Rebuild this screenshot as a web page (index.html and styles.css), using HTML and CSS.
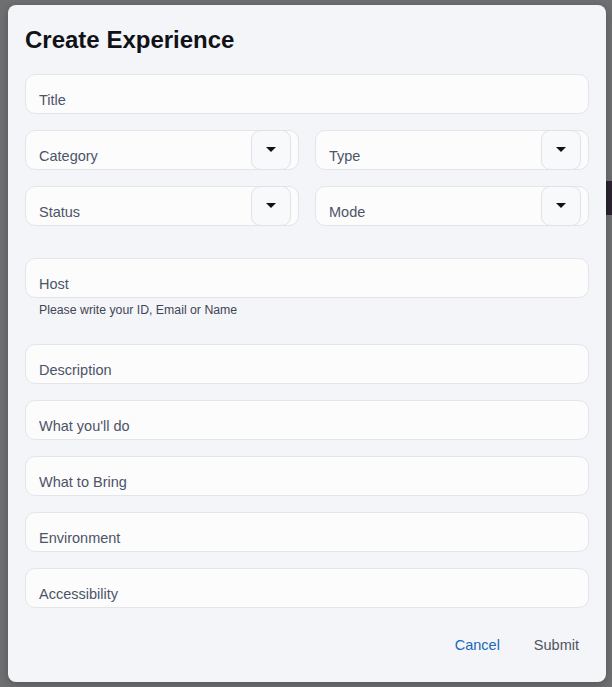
FILE: index.html
```html
<!DOCTYPE html>
<html lang="en">
<head>
    <meta charset="UTF-8">
    <meta name="viewport" content="width=device-width, initial-scale=1.0">
    <title>Create Experience</title>
    <link rel="stylesheet" href="styles.css">
</head>
<body>
    <div class="backdrop">
        <div class="page-strip"></div>
    </div>
    <div class="modal">
        <h2 class="modal-title">Create Experience</h2>
        <form class="form">
            <div class="field"><span class="label">Title</span></div>

            <div class="row">
                <div class="field select"><span class="label">Category</span><span class="drop"><i class="caret"></i></span></div>
                <div class="field select"><span class="label">Type</span><span class="drop"><i class="caret"></i></span></div>
            </div>
            <div class="row row-last">
                <div class="field select"><span class="label">Status</span><span class="drop"><i class="caret"></i></span></div>
                <div class="field select"><span class="label">Mode</span><span class="drop"><i class="caret"></i></span></div>
            </div>

            <div class="host-group">
                <div class="field"><span class="label">Host</span></div>
                <p class="helper">Please write your ID, Email or Name</p>
            </div>

            <div class="field"><span class="label">Description</span></div>
            <div class="field"><span class="label">What you'll do</span></div>
            <div class="field"><span class="label">What to Bring</span></div>
            <div class="field"><span class="label">Environment</span></div>
            <div class="field"><span class="label">Accessibility</span></div>
        </form>
        <div class="actions">
            <button class="btn btn-cancel" type="button">Cancel</button>
            <button class="btn btn-submit" type="button">Submit</button>
        </div>
    </div>
</body>
</html>
```

FILE: styles.css
```css
html, body {
    margin: 0;
    padding: 0;
    height: 100%;
}
body {
    font-family: 'Liberation Sans', Arial, sans-serif;
    background: #6f7071;
    overflow: hidden;
    position: relative;
}
.backdrop {
    position: absolute;
    inset: 0;
    background: #6f7071;
}
.page-strip {
    position: absolute;
    right: 0;
    top: 181px;
    width: 20px;
    height: 34px;
    background: #2b2330;
}
.modal {
    position: relative;
    margin: 5px 0 0 8px;
    width: 598px;
    height: 677px;
    box-sizing: border-box;
    background: #f4f5f9;
    border-radius: 8px;
    box-shadow: 0 2px 10px rgba(0, 0, 0, 0.25);
    padding: 17px 17px 0 17px;
}
.modal-title {
    margin: 0;
    font-size: 24px;
    font-weight: 700;
    color: #111217;
    line-height: 36px;
}
.form {
    margin-top: 16px;
    display: flex;
    flex-direction: column;
    gap: 16px;
}
.row {
    display: flex;
    gap: 16px;
}
.row .field {
    flex: 1;
}
.row-last {
    margin-bottom: 16px;
}
.field {
    position: relative;
    height: 40px;
    box-sizing: border-box;
    background: #fcfcfd;
    border: 1px solid #e3e5ea;
    border-radius: 10px;
    display: flex;
    align-items: flex-end;
    padding: 0 13px 4px;
}
.label {
    font-size: 14.5px;
    color: #4c5467;
    line-height: 17px;
}
.drop {
    position: absolute;
    top: -1px;
    right: 7px;
    width: 40px;
    height: 40px;
    box-sizing: border-box;
    border: 1px solid #e0e2e8;
    border-radius: 9px;
    background: #f8f9fb;
    display: flex;
    align-items: center;
    justify-content: center;
}
.caret {
    width: 0;
    height: 0;
    border-left: 5px solid transparent;
    border-right: 5px solid transparent;
    border-top: 5px solid #111;
    margin-top: -2px;
}
.host-group {
    display: flex;
    flex-direction: column;
}
.helper {
    margin: 5px 0 0 14px;
    font-size: 12.3px;
    color: #3f4553;
    line-height: 14px;
    height: 25px;
}
.actions {
    display: flex;
    justify-content: flex-end;
    margin-top: 22px;
    padding-right: 2px;
}
.btn {
    background: none;
    border: none;
    font-family: inherit;
    font-size: 14.5px;
    padding: 6px 8px;
    cursor: pointer;
    line-height: 18px;
}
.btn-cancel {
    color: #1b67b8;
    margin-right: 18px;
}
.btn-submit {
    color: #50545c;
}
```
